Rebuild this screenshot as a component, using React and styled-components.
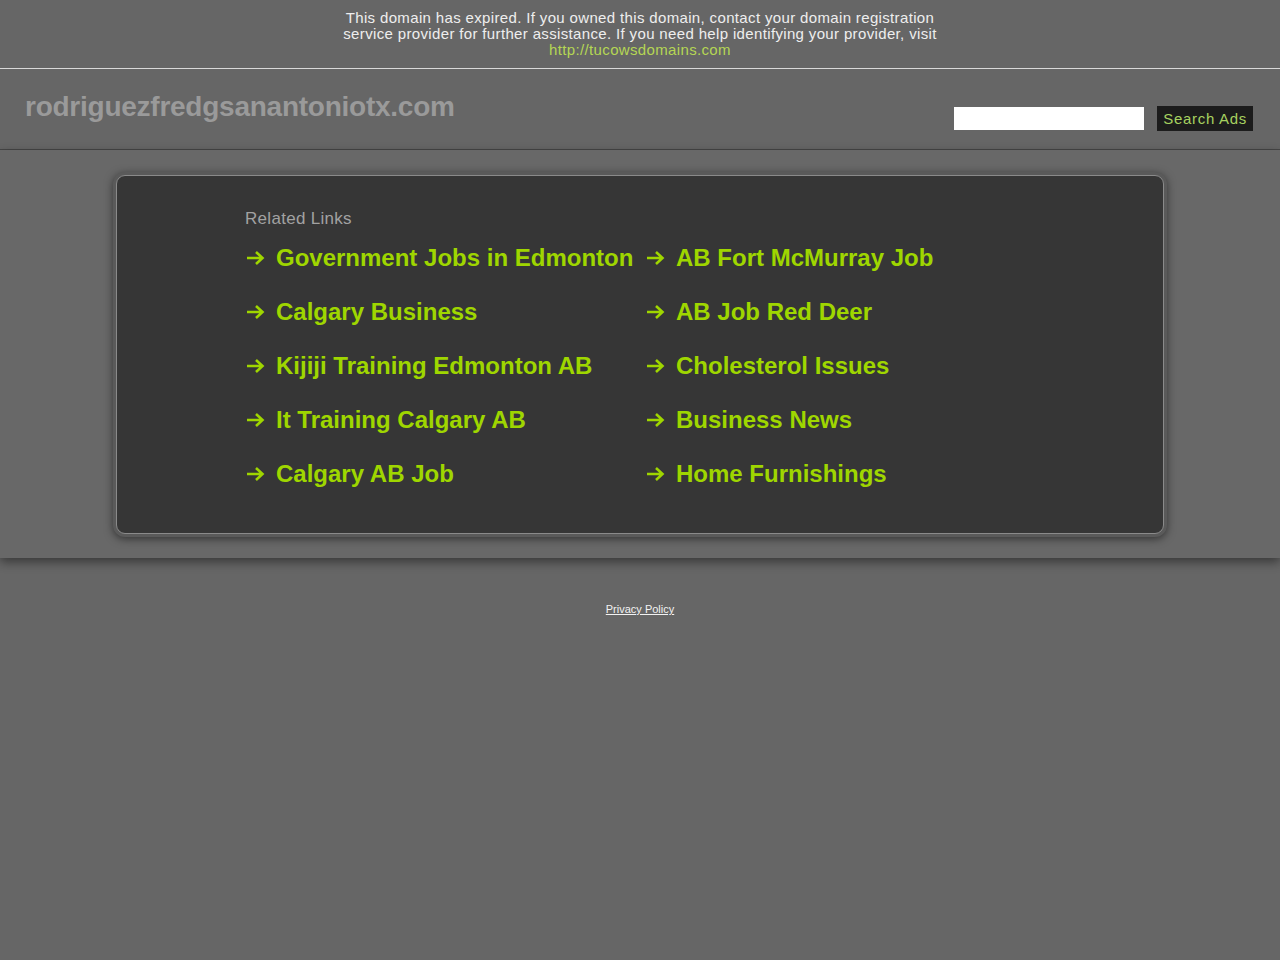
import React from "react";
import styled, { createGlobalStyle } from "styled-components";

const GlobalStyle = createGlobalStyle`
  html, body {
    margin: 0;
    padding: 0;
    background: #666666;
    font-family: "Liberation Sans", Arial, sans-serif;
  }
`;

const Page = styled.div`
  min-height: 960px;
  background: #666666;
`;

const Notice = styled.div`
  border-bottom: 1px solid #d9d9d9;
  padding: 10px 0 10px;
  display: flex;
  justify-content: center;
`;

const NoticeText = styled.p`
  margin: 0;
  width: 610px;
  text-align: center;
  font-size: 15px;
  line-height: 16px;
  letter-spacing: 0.35px;
  color: #eeeeee;
`;

const NoticeLink = styled.a`
  color: #b5d654;
  text-decoration: none;
`;

const Header = styled.header`
  height: 80px;
  border-bottom: 1px solid #474747;
  display: flex;
  align-items: flex-start;
  justify-content: space-between;
  padding: 0 27px 0 25px;
`;

const Domain = styled.h1`
  margin: 22px 0 0;
  font-size: 28px;
  font-weight: bold;
  color: #9a9a9a;
  letter-spacing: -0.25px;
`;

const SearchForm = styled.form`
  display: flex;
  align-items: center;
  gap: 13px;
  margin-top: 37px;
`;

const SearchInput = styled.input`
  width: 190px;
  height: 23px;
  box-sizing: border-box;
  border: none;
  background: #ffffff;
  padding: 0 4px;
`;

const SearchButton = styled.button`
  height: 25px;
  padding: 0 6px;
  background: #1c1c1c;
  border: none;
  color: #a7d260;
  font-family: "Liberation Sans", Arial, sans-serif;
  font-size: 15px;
  letter-spacing: 0.7px;
  cursor: pointer;
`;

const Main = styled.main`
  padding: 25px 0 24px;
  display: flex;
  justify-content: center;
  background: #686868;
  box-shadow: 0 4px 10px rgba(0, 0, 0, 0.45);
  position: relative;
`;

const Panel = styled.section`
  width: 1048px;
  box-sizing: border-box;
  height: 359px;
  background: #363636;
  border: 1px solid #8a8a8a;
  border-radius: 9px;
  box-shadow: 0 0 0 3px #5a5a5a, 0 2px 8px 3px rgba(0, 0, 0, 0.5);
  padding: 33px 0 0 128px;
`;

const PanelTitle = styled.h2`
  margin: 0 0 2px;
  font-size: 17px;
  font-weight: normal;
  letter-spacing: 0.3px;
  color: #a2a2a2;
`;

const LinkGrid = styled.ul`
  list-style: none;
  margin: 0;
  padding: 0;
  display: grid;
  grid-template-columns: 400px 400px;
`;

const LinkItem = styled.li`
  height: 54px;
  display: flex;
  align-items: center;
  white-space: nowrap;
`;

const ArrowIcon = styled.svg`
  width: 19px;
  height: 16px;
  margin: 0 11px 0 1px;
  flex: none;
`;

const LinkText = styled.a`
  color: #9fd600;
  font-size: 24px;
  font-weight: bold;
  text-decoration: none;
`;

const Footer = styled.footer`
  padding-top: 45px;
  display: flex;
  justify-content: center;
`;

const FooterLink = styled.a`
  color: #f2f2f2;
  font-size: 11px;
  text-decoration: underline;
`;

const links = [
  "Government Jobs in Edmonton",
  "AB Fort McMurray Job",
  "Calgary Business",
  "AB Job Red Deer",
  "Kijiji Training Edmonton AB",
  "Cholesterol Issues",
  "It Training Calgary AB",
  "Business News",
  "Calgary AB Job",
  "Home Furnishings",
];

const Arrow = () => (
  <ArrowIcon viewBox="0 0 19 16" aria-hidden="true">
    <path
      d="M1 8H16M10 2L16.5 8L10 14"
      fill="none"
      stroke="#9fd600"
      strokeWidth="2.6"
      strokeLinecap="butt"
      strokeLinejoin="miter"
    />
  </ArrowIcon>
);

export default function App() {
  return (
    <Page>
      <GlobalStyle />
      <Notice>
        <NoticeText>
          This domain has expired. If you owned this domain, contact your domain registration
          service provider for further assistance. If you need help identifying your provider, visit{" "}
          <NoticeLink href="#">http://tucowsdomains.com</NoticeLink>
        </NoticeText>
      </Notice>
      <Header>
        <Domain>rodriguezfredgsanantoniotx.com</Domain>
        <SearchForm onSubmit={(e) => e.preventDefault()}>
          <SearchInput type="text" />
          <SearchButton type="submit">Search Ads</SearchButton>
        </SearchForm>
      </Header>
      <Main>
        <Panel>
          <PanelTitle>Related Links</PanelTitle>
          <LinkGrid>
            {links.map((l) => (
              <LinkItem key={l}>
                <Arrow />
                <LinkText href="#">{l}</LinkText>
              </LinkItem>
            ))}
          </LinkGrid>
        </Panel>
      </Main>
      <Footer>
        <FooterLink href="#">Privacy Policy</FooterLink>
      </Footer>
    </Page>
  );
}
